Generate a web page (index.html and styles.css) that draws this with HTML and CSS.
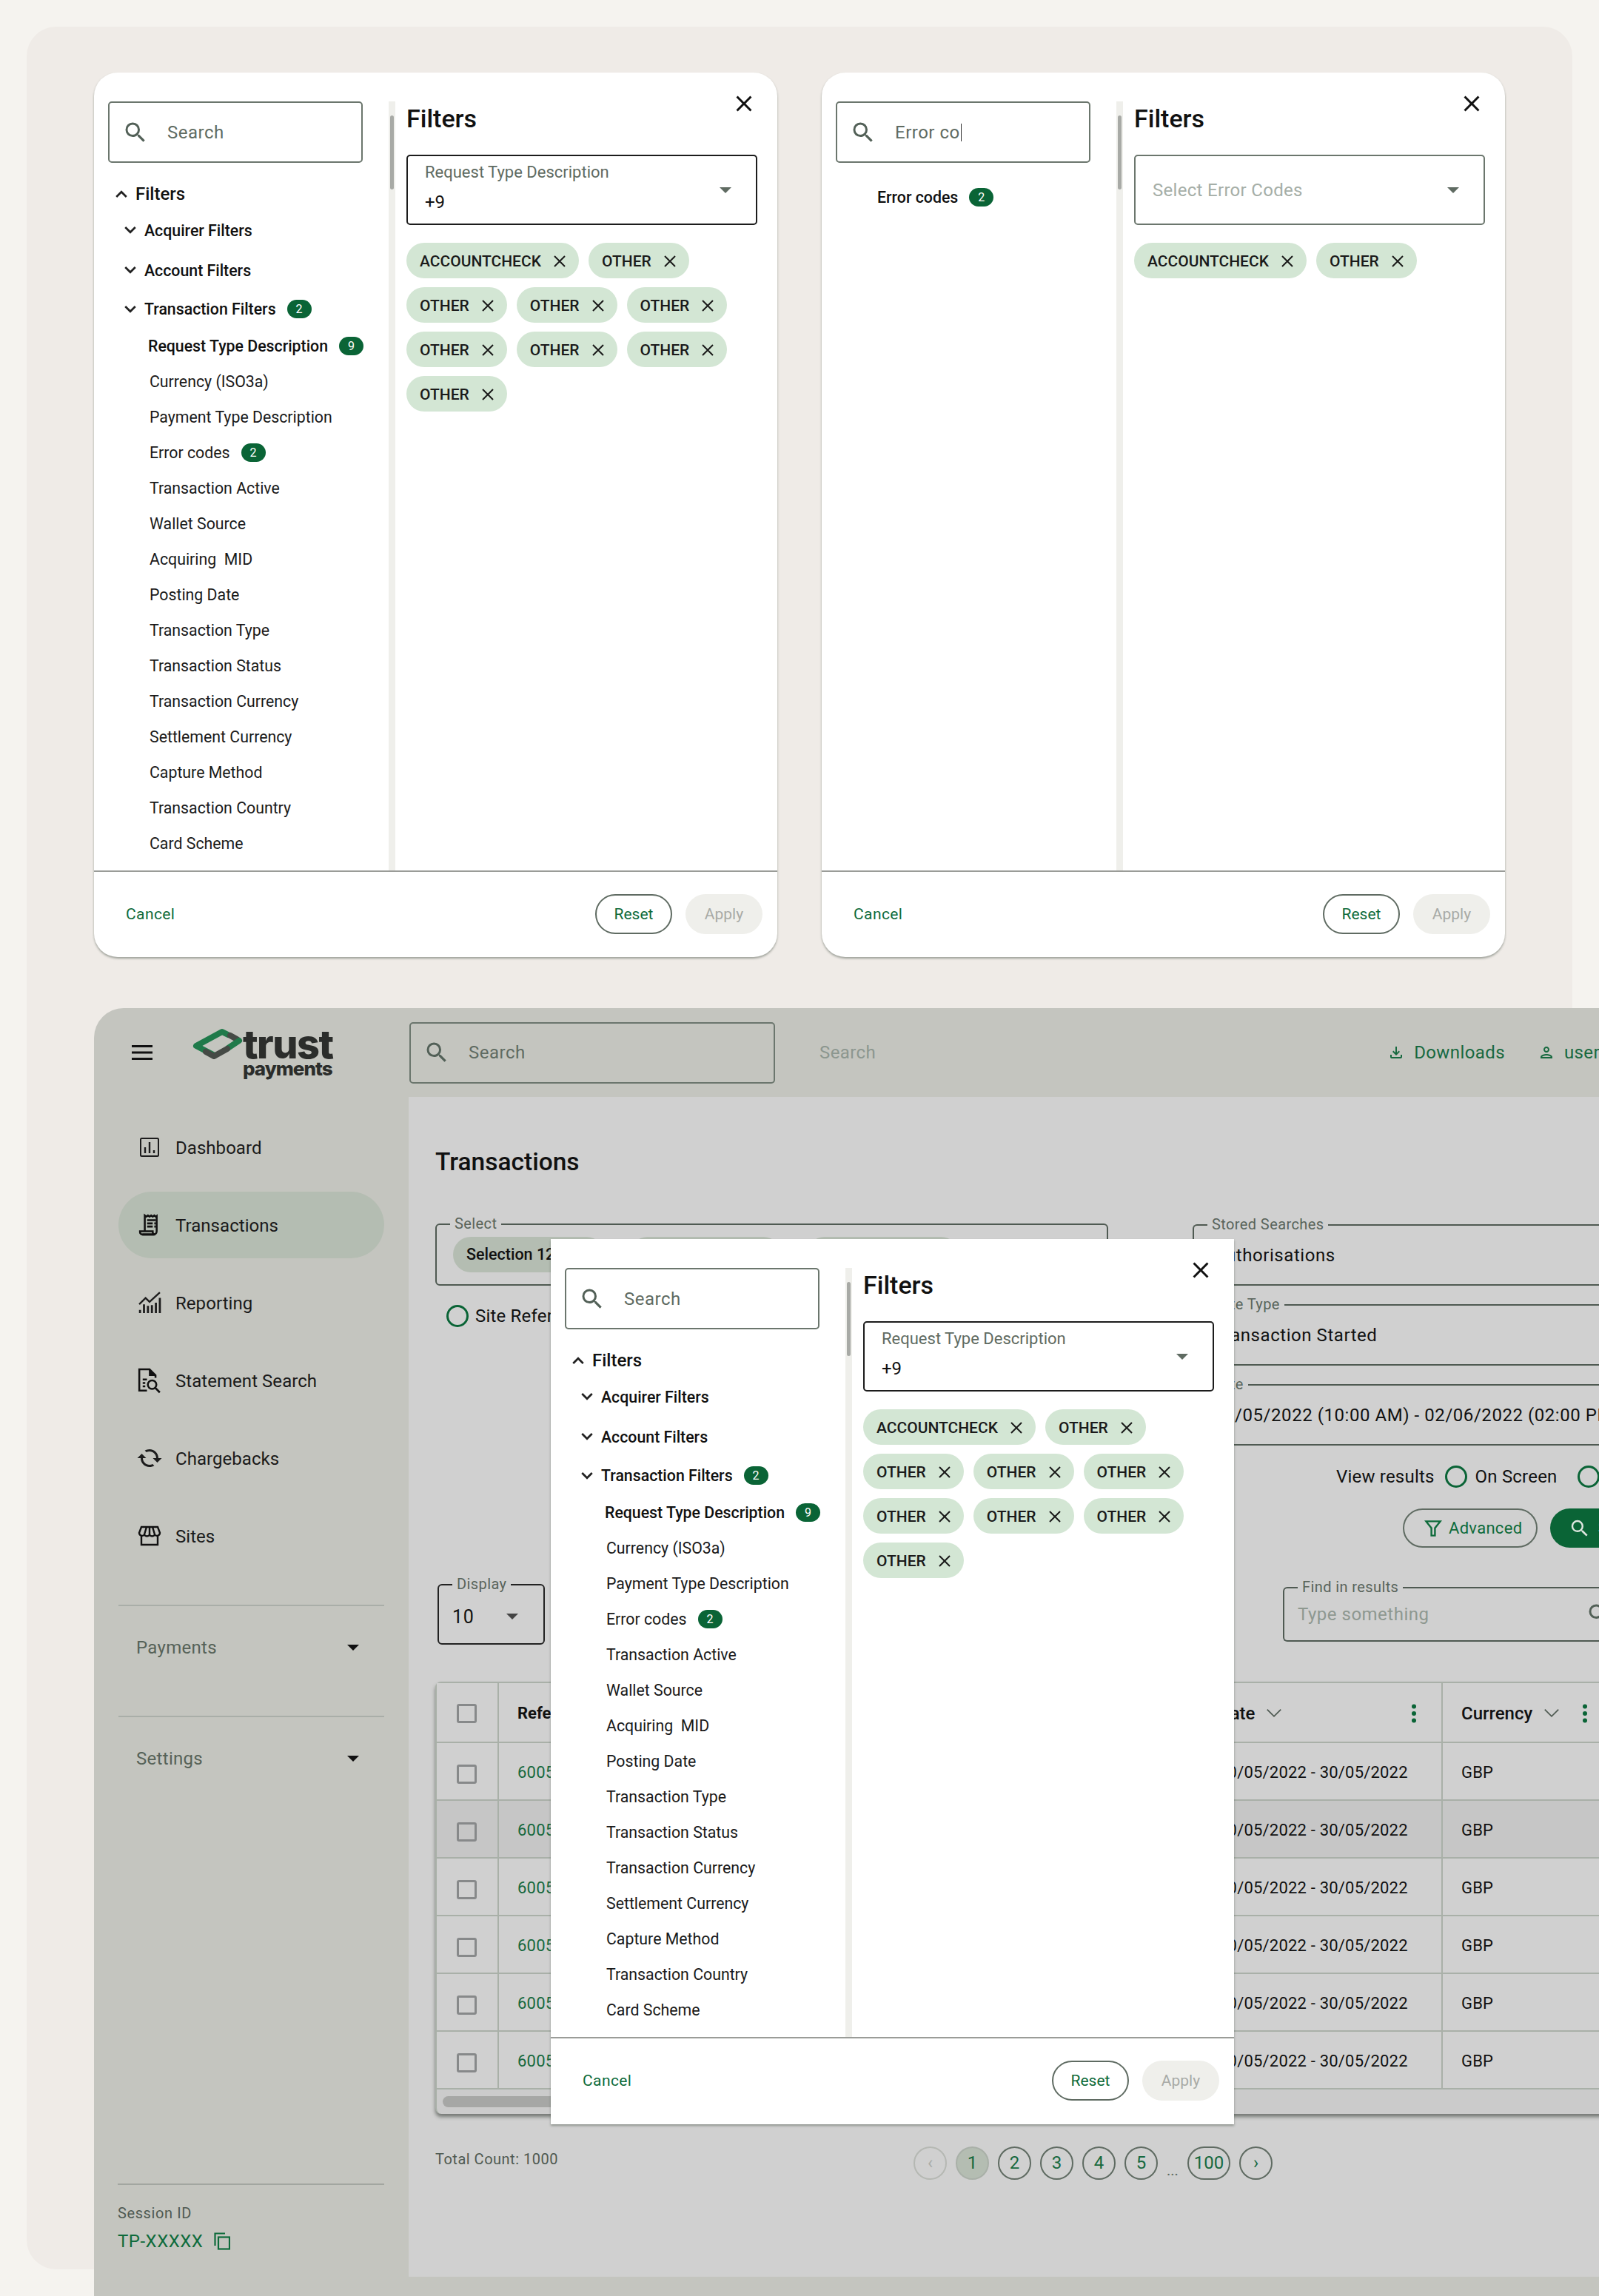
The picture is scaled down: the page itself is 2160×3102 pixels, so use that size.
FILE: index.html
```html
<!DOCTYPE html>
<html lang="en">
<head>
    <meta charset="UTF-8">
    <title>Transactions - Filters</title>
    <link rel="stylesheet" href="styles.css">
</head>
<body>
    <svg class="sprite" xmlns="http://www.w3.org/2000/svg">
        <symbol id="i-search" viewBox="0 0 24 24"><path d="M15.5 14h-.79l-.28-.27A6.471 6.471 0 0 0 16 9.5 6.5 6.5 0 1 0 9.5 16c1.61 0 3.09-.59 4.23-1.57l.27.28v.79l5 4.99L20.49 19l-4.99-5zm-6 0C7.01 14 5 11.99 5 9.5S7.01 5 9.5 5 14 7.01 14 9.5 11.99 14 9.5 14z"/></symbol>
        <symbol id="i-close" viewBox="0 0 24 24"><path d="M19 6.41 17.59 5 12 10.59 6.41 5 5 6.41 10.59 12 5 17.59 6.41 19 12 13.41 17.59 19 19 17.59 13.41 12z"/></symbol>
        <symbol id="i-x" viewBox="0 0 20 20"><path d="M3 3 17 17M17 3 3 17" fill="none" stroke="currentColor" stroke-width="2"/></symbol>
        <symbol id="i-up" viewBox="0 0 16 10"><path d="M2 8.5 8 2.5l6 6" fill="none" stroke="currentColor" stroke-width="2.4"/></symbol>
        <symbol id="i-down" viewBox="0 0 16 10"><path d="M2 1.5 8 7.5l6-6" fill="none" stroke="currentColor" stroke-width="2.4"/></symbol>
        <symbol id="i-thin-down" viewBox="0 0 20 12"><path d="M1.5 1.5 10 10l8.5-8.5" fill="none" stroke="currentColor" stroke-width="1.6"/></symbol>
        <symbol id="i-kebab" viewBox="0 0 8 26"><circle cx="4" cy="3.5" r="3"/><circle cx="4" cy="13" r="3"/><circle cx="4" cy="22.5" r="3"/></symbol>
        <symbol id="i-download" viewBox="0 0 24 24"><path d="M18 15v3H6v-3H4v3c0 1.1.9 2 2 2h12c1.1 0 2-.9 2-2v-3h-2zm-1-4-1.41-1.41L13 12.17V4h-2v8.17L8.41 9.59 7 11l5 5 5-5z"/></symbol>
        <symbol id="i-user" viewBox="0 0 24 24"><path d="M12 6c1.1 0 2 .9 2 2s-.9 2-2 2-2-.9-2-2 .9-2 2-2m0 10c2.7 0 5.8 1.29 6 2H6c.23-.72 3.31-2 6-2m0-12C9.79 4 8 5.79 8 8s1.79 4 4 4 4-1.79 4-4-1.79-4-4-4zm0 10c-2.67 0-8 1.34-8 4v2h16v-2c0-2.66-5.33-4-8-4z"/></symbol>
    </svg>

    <div class="backdrop">
        <div class="card-row">
            <section class="filter-modal rounded">
                <svg class="modal-close"><use href="#i-close"/></svg>
                <div class="modal-body">
                    <div class="tree-pane">
                        <div class="search-box"><svg class="search-icon"><use href="#i-search"/></svg><span>Search</span></div>
                        <div class="tree-root"><svg class="chev"><use href="#i-up"/></svg>Filters</div>
                        <div class="tree-group"><svg class="chev"><use href="#i-down"/></svg>Acquirer Filters</div>
                        <div class="tree-group"><svg class="chev"><use href="#i-down"/></svg>Account Filters</div>
                        <div class="tree-group open"><svg class="chev"><use href="#i-down"/></svg>Transaction Filters<span class="count">2</span></div>
                        <div class="tree-item active">Request Type Description<span class="count">9</span></div>
                        <div class="tree-item">Currency (ISO3a)</div>
                        <div class="tree-item">Payment Type Description</div>
                        <div class="tree-item">Error codes<span class="count">2</span></div>
                        <div class="tree-item">Transaction Active</div>
                        <div class="tree-item">Wallet Source</div>
                        <div class="tree-item">Acquiring&nbsp; MID</div>
                        <div class="tree-item">Posting Date</div>
                        <div class="tree-item">Transaction Type</div>
                        <div class="tree-item">Transaction Status</div>
                        <div class="tree-item">Transaction Currency</div>
                        <div class="tree-item">Settlement Currency</div>
                        <div class="tree-item">Capture Method</div>
                        <div class="tree-item">Transaction Country</div>
                        <div class="tree-item">Card Scheme</div>
                    </div>
                    <div class="scroll-track"><div class="scroll-thumb"></div></div>
                    <div class="detail-pane">
                        <h2 class="detail-title">Filters</h2>
                        <div class="select-box">
                            <div class="select-label">Request Type Description</div>
                            <div class="select-value">+9</div>
                            <i class="caret select-caret"></i>
                        </div>
                        <div class="chips">
                            <span class="chip">ACCOUNTCHECK<svg><use href="#i-x"/></svg></span>
                            <span class="chip">OTHER<svg><use href="#i-x"/></svg></span>
                            <span class="chip">OTHER<svg><use href="#i-x"/></svg></span>
                            <span class="chip">OTHER<svg><use href="#i-x"/></svg></span>
                            <span class="chip">OTHER<svg><use href="#i-x"/></svg></span>
                            <span class="chip">OTHER<svg><use href="#i-x"/></svg></span>
                            <span class="chip">OTHER<svg><use href="#i-x"/></svg></span>
                            <span class="chip">OTHER<svg><use href="#i-x"/></svg></span>
                            <span class="chip">OTHER<svg><use href="#i-x"/></svg></span>
                        </div>
                    </div>
                </div>
                <div class="modal-footer">
                    <span class="cancel">Cancel</span>
                    <span class="btn-reset">Reset</span>
                    <span class="btn-apply">Apply</span>
                </div>
            </section>

            <section class="filter-modal rounded">
                <svg class="modal-close"><use href="#i-close"/></svg>
                <div class="modal-body">
                    <div class="tree-pane">
                        <div class="search-box"><svg class="search-icon"><use href="#i-search"/></svg><span>Error co<b class="text-caret"></b></span></div>
                        <div class="tree-item active found">Error codes<span class="count">2</span></div>
                    </div>
                    <div class="scroll-track"><div class="scroll-thumb"></div></div>
                    <div class="detail-pane">
                        <h2 class="detail-title">Filters</h2>
                        <div class="select-box empty">
                            <div class="select-placeholder">Select Error Codes</div>
                            <i class="caret select-caret"></i>
                        </div>
                        <div class="chips">
                            <span class="chip">ACCOUNTCHECK<svg><use href="#i-x"/></svg></span>
                            <span class="chip">OTHER<svg><use href="#i-x"/></svg></span>
                        </div>
                    </div>
                </div>
                <div class="modal-footer">
                    <span class="cancel">Cancel</span>
                    <span class="btn-reset">Reset</span>
                    <span class="btn-apply">Apply</span>
                </div>
            </section>
        </div>

        <div class="app">
            <header class="app-header">
                <div class="brand">
                    <svg class="burger" viewBox="0 0 28 20"><path d="M0 1.5h28M0 10h28M0 18.5h28" stroke="#111" stroke-width="3"/></svg>
                    <div class="logo">
                        <svg class="logo-mark" viewBox="0 0 70 46">
                            <g fill="none" stroke-width="8" stroke-linejoin="round" stroke-linecap="round">
                                <path d="M30 37 5 24 40 5 48 9" stroke="#1f7a4a"/>
                                <path d="M51 10 60 15" stroke="#454a45"/>
                                <path d="M63 17 48 27" stroke="#1f7a4a"/>
                                <path d="M47 28 29 38 18 32" stroke="#454a45"/>
                            </g>
                        </svg>
                        <div class="logo-text">
                            <div class="logo-trust">trust</div>
                            <div class="logo-payments">payments</div>
                        </div>
                    </div>
                </div>
                <div class="search-box header-search"><svg class="search-icon"><use href="#i-search"/></svg><span>Search</span></div>
                <div class="header-hint">Search</div>
                <div class="header-link downloads"><svg><use href="#i-download"/></svg>Downloads</div>
                <div class="header-link account"><svg><use href="#i-user"/></svg>username</div>
            </header>

            <div class="app-body">
                <aside class="sidebar">
                    <nav class="nav">
                        <div class="nav-item">
                            <svg viewBox="0 0 30 30" fill="none" stroke="#1d1d1d"><rect x="3" y="3" width="24" height="24" rx="1.5" stroke-width="2"/><path d="M9 23v-8M15 23V8M21 23v-4" stroke-width="2.4"/></svg>
                            Dashboard
                        </div>
                        <div class="nav-item current">
                            <svg viewBox="0 0 28 28" fill="none" stroke="#111"><path d="M8 22V2l2 1.5 2-1.5 2 1.5 2-1.5 2 1.5 2-1.5 2 1.5 1-.8V22a4 4 0 0 1-4 4H5" stroke-width="2.4"/><path d="M2 22h16v1a3 3 0 0 0 3 3H5a3 3 0 0 1-3-3z" stroke-width="2.4"/><path d="M11 8h11M11 12h7M20 12h2M11 16h7M20 16h2" stroke-width="2.4"/></svg>
                            Transactions
                        </div>
                        <div class="nav-item">
                            <svg viewBox="0 0 28 28" fill="none" stroke="#1d1d1d"><path d="M1 16 9 8l5 5L27 1" stroke-width="2.2"/><path d="M2 27v-4M7 27V16M12 27v-9M17 27v-10M22 27V14M27 27V8" stroke-width="2.6"/></svg>
                            Reporting
                        </div>
                        <div class="nav-item">
                            <svg viewBox="3 2 26 26" fill="none" stroke="#111"><path d="M13 27H4V2h12l7 7v3" stroke-width="2.2"/><path d="M16 2v7h7" fill="#111" stroke-width="1.5"/><path d="M8 14h5M8 18h3M8 22h3" stroke-width="2.2"/><circle cx="19" cy="20" r="5" stroke-width="2.2"/><path d="m23 24 5 5" stroke-width="2.4"/></svg>
                            Statement Search
                        </div>
                        <div class="nav-item">
                            <svg viewBox="2 2 20 20" fill="#1d1d1d"><path transform="matrix(1 0 0 -1 0 24)" d="M19 8l-4 4h3c0 3.31-2.69 6-6 6-1.01 0-1.97-.25-2.8-.7l-1.46 1.46C8.97 19.54 10.43 20 12 20c4.42 0 8-3.58 8-8h3l-4-4zM6 12c0-3.31 2.69-6 6-6 1.01 0 1.97.25 2.8.7l1.46-1.46C15.03 4.46 13.57 4 12 4c-4.42 0-8 3.58-8 8H1l4 4 4-4H6z"/></svg>
                            Chargebacks
                        </div>
                        <div class="nav-item">
                            <svg viewBox="0 0 30 28" fill="none" stroke="#111" stroke-width="2.4"><path d="M4 14v12h22V14"/><path d="M4 2h22l3 8a4 4 0 0 1-7 2.5 4 4 0 0 1-7 0 4 4 0 0 1-7 0A4 4 0 0 1 1 10z"/><path d="M11 2 8 12M19 2l3 10M15 2v10"/></svg>
                            Sites
                        </div>
                    </nav>
                    <div class="side-section">Payments<i class="caret dark"></i></div>
                    <div class="side-section">Settings<i class="caret dark"></i></div>
                    <div class="session">
                        <div class="session-label">Session ID</div>
                        <div class="session-id">TP-XXXXX
                            <svg viewBox="0 0 22 24" fill="none" stroke="#0e6b3b" stroke-width="2.2"><path d="M1.5 18V1.5H15"/><rect x="6" y="6.5" width="15" height="16"/></svg>
                        </div>
                    </div>
                </aside>

                <main class="main">
                    <h1 class="page-title">Transactions</h1>
                    <div class="search-panel">
                        <div class="panel-left">
                            <div class="field select-field">
                                <span class="field-label">Select</span>
                                <span class="sel-chip">Selection 123456</span>
                                <span class="sel-chip">Selection 123456</span>
                                <span class="sel-chip">Selection 123456</span>
                            </div>
                            <div class="radio-row site-ref"><i class="radio"></i>Site Reference</div>
                        </div>
                        <div class="panel-right">
                            <div class="field open-field"><span class="field-label">Stored Searches</span>Authorisations</div>
                            <div class="field open-field"><span class="field-label">Date Type</span>Transaction Started</div>
                            <div class="field open-field"><span class="field-label">Date</span>30/05/2022 (10:00 AM) - 02/06/2022 (02:00 PM)</div>
                            <div class="radio-row view-row">View results<i class="radio"></i>On Screen<i class="radio"></i>File</div>
                            <div class="actions">
                                <span class="btn-advanced">
                                    <svg viewBox="0 0 20 20" fill="none" stroke="#0e6b3b" stroke-width="2"><path d="M2 2h16l-6 7.5V18H8V9.5z"/></svg>
                                    Advanced
                                </span>
                                <span class="btn-search"><svg><use href="#i-search"/></svg>Search</span>
                            </div>
                        </div>
                    </div>
                    <div class="toolbar">
                        <div class="field display-field"><span class="field-label">Display</span>10<i class="caret"></i></div>
                        <div class="field find-field"><span class="field-label">Find in results</span><span class="find-hint">Type something</span><svg class="search-icon"><use href="#i-search"/></svg></div>
                    </div>
                    <div class="table">
                        <div class="t-row t-head">
                            <div class="cell"><i class="check"></i></div>
                            <div class="cell">Reference</div>
                            <div class="cell">Date<svg class="sort"><use href="#i-thin-down"/></svg><svg class="kebab"><use href="#i-kebab"/></svg></div>
                            <div class="cell">Currency<svg class="sort"><use href="#i-thin-down"/></svg><svg class="kebab"><use href="#i-kebab"/></svg></div>
                        </div>
                        <div class="t-row">
                            <div class="cell"><i class="check"></i></div><div class="cell ref">6005000001</div>
                            <div class="cell">30/05/2022 - 30/05/2022</div><div class="cell">GBP</div>
                        </div>
                        <div class="t-row shaded">
                            <div class="cell"><i class="check"></i></div><div class="cell ref">6005000002</div>
                            <div class="cell">30/05/2022 - 30/05/2022</div><div class="cell">GBP</div>
                        </div>
                        <div class="t-row">
                            <div class="cell"><i class="check"></i></div><div class="cell ref">6005000003</div>
                            <div class="cell">30/05/2022 - 30/05/2022</div><div class="cell">GBP</div>
                        </div>
                        <div class="t-row">
                            <div class="cell"><i class="check"></i></div><div class="cell ref">6005000004</div>
                            <div class="cell">30/05/2022 - 30/05/2022</div><div class="cell">GBP</div>
                        </div>
                        <div class="t-row">
                            <div class="cell"><i class="check"></i></div><div class="cell ref">6005000005</div>
                            <div class="cell">30/05/2022 - 30/05/2022</div><div class="cell">GBP</div>
                        </div>
                        <div class="t-row">
                            <div class="cell"><i class="check"></i></div><div class="cell ref">6005000006</div>
                            <div class="cell">30/05/2022 - 30/05/2022</div><div class="cell">GBP</div>
                        </div>
                        <div class="t-scroll"><div class="t-thumb"></div></div>
                    </div>
                    <div class="table-footer">
                        <div class="total">Total Count: 1000</div>
                        <div class="pager">
                            <span class="page-btn off">&#8249;</span>
                            <span class="page-btn on">1</span>
                            <span class="page-btn">2</span>
                            <span class="page-btn">3</span>
                            <span class="page-btn">4</span>
                            <span class="page-btn">5</span>
                            <span class="page-gap">...</span>
                            <span class="page-btn wide">100</span>
                            <span class="page-btn">&#8250;</span>
                        </div>
                    </div>
                </main>
            </div>

            <section class="filter-modal overlay">
                <svg class="modal-close"><use href="#i-close"/></svg>
                <div class="modal-body">
                    <div class="tree-pane">
                        <div class="search-box"><svg class="search-icon"><use href="#i-search"/></svg><span>Search</span></div>
                        <div class="tree-root"><svg class="chev"><use href="#i-up"/></svg>Filters</div>
                        <div class="tree-group"><svg class="chev"><use href="#i-down"/></svg>Acquirer Filters</div>
                        <div class="tree-group"><svg class="chev"><use href="#i-down"/></svg>Account Filters</div>
                        <div class="tree-group open"><svg class="chev"><use href="#i-down"/></svg>Transaction Filters<span class="count">2</span></div>
                        <div class="tree-item active">Request Type Description<span class="count">9</span></div>
                        <div class="tree-item">Currency (ISO3a)</div>
                        <div class="tree-item">Payment Type Description</div>
                        <div class="tree-item">Error codes<span class="count">2</span></div>
                        <div class="tree-item">Transaction Active</div>
                        <div class="tree-item">Wallet Source</div>
                        <div class="tree-item">Acquiring&nbsp; MID</div>
                        <div class="tree-item">Posting Date</div>
                        <div class="tree-item">Transaction Type</div>
                        <div class="tree-item">Transaction Status</div>
                        <div class="tree-item">Transaction Currency</div>
                        <div class="tree-item">Settlement Currency</div>
                        <div class="tree-item">Capture Method</div>
                        <div class="tree-item">Transaction Country</div>
                        <div class="tree-item">Card Scheme</div>
                    </div>
                    <div class="scroll-track"><div class="scroll-thumb"></div></div>
                    <div class="detail-pane">
                        <h2 class="detail-title">Filters</h2>
                        <div class="select-box">
                            <div class="select-label">Request Type Description</div>
                            <div class="select-value">+9</div>
                            <i class="caret select-caret"></i>
                        </div>
                        <div class="chips">
                            <span class="chip">ACCOUNTCHECK<svg><use href="#i-x"/></svg></span>
                            <span class="chip">OTHER<svg><use href="#i-x"/></svg></span>
                            <span class="chip">OTHER<svg><use href="#i-x"/></svg></span>
                            <span class="chip">OTHER<svg><use href="#i-x"/></svg></span>
                            <span class="chip">OTHER<svg><use href="#i-x"/></svg></span>
                            <span class="chip">OTHER<svg><use href="#i-x"/></svg></span>
                            <span class="chip">OTHER<svg><use href="#i-x"/></svg></span>
                            <span class="chip">OTHER<svg><use href="#i-x"/></svg></span>
                            <span class="chip">OTHER<svg><use href="#i-x"/></svg></span>
                        </div>
                    </div>
                </div>
                <div class="modal-footer">
                    <span class="cancel">Cancel</span>
                    <span class="btn-reset">Reset</span>
                    <span class="btn-apply">Apply</span>
                </div>
            </section>
        </div>
    </div>
</body>
</html>
```

FILE: styles.css
```css
* {
    box-sizing: border-box;
}
html, body {
    margin: 0;
    height: 3102px;
    overflow: hidden;
}
body {
    width: 2160px;
    padding: 36px;
    background-color: #f5f3ef;
    font-family: Roboto, "Liberation Sans", sans-serif;
    color: #111;
}
i {
    font-style: normal;
    display: block;
}
.sprite {
    position: absolute;
    width: 0;
    height: 0;
}

/* outer beige panel */
.backdrop {
    width: 2088px;
    height: 3030px;
    padding: 62px 0 0 91px;
    background-color: #efebe7;
    border-radius: 40px;
}
.card-row {
    display: flex;
    gap: 60px;
}

/* filter modal, used three times */
.filter-modal {
    position: relative;
    width: 923px;
    height: 1195px;
    background-color: #fff;
    box-shadow: 0 2px 3px rgba(60, 70, 60, 0.45);
}
.filter-modal.rounded {
    border-radius: 32px;
}
.filter-modal.overlay {
    position: absolute;
    left: 617px;
    top: 312px;
    height: 1196px;
}
.modal-close {
    position: absolute;
    top: 24px;
    right: 27px;
    width: 36px;
    height: 36px;
    fill: #111;
}
.modal-body {
    display: flex;
    height: 1080px;
    padding-top: 39px;
    border-bottom: 2px solid #9a9c98;
}
.tree-pane {
    width: 398px;
    padding-left: 19px;
    flex-shrink: 0;
}
.search-box {
    display: flex;
    align-items: center;
    width: 344px;
    height: 83px;
    padding-left: 17px;
    border: 2px solid #6b766d;
    border-radius: 5px;
    font-size: 24px;
    letter-spacing: 0.5px;
    color: #5f6b62;
}
.search-icon {
    width: 36px;
    height: 36px;
    margin-right: 25px;
    fill: #526057;
    flex-shrink: 0;
}
.text-caret {
    display: inline-block;
    width: 1px;
    height: 24px;
    margin-left: 1px;
    vertical-align: -4px;
    background-color: #333;
}
.tree-root {
    display: flex;
    align-items: center;
    height: 44px;
    margin-top: 20px;
    font-size: 24px;
    font-weight: 500;
}
.chev {
    width: 18px;
    height: 12px;
    color: #222;
    flex-shrink: 0;
}
.tree-root .chev {
    margin: 0 10px 0 9px;
}
.tree-group {
    display: flex;
    align-items: center;
    height: 54px;
    font-size: 21.3px;
    font-weight: 500;
}
.tree-group .chev {
    margin: 0 10px 0 21px;
}
.tree-group.open {
    height: 51px;
}
.tree-item {
    display: flex;
    align-items: center;
    height: 48px;
    padding-left: 56px;
    font-size: 21.3px;
    color: #1a1a1a;
}
.tree-item.active {
    padding-left: 54px;
    font-weight: 500;
    color: #111;
}
.tree-item.found {
    height: 48px;
    margin-top: 22px;
    padding-left: 56px;
}
.count {
    display: inline-block;
    width: 33px;
    height: 25px;
    margin-left: 15px;
    border-radius: 13px;
    background-color: #0a6436;
    color: #fff;
    font-size: 16px;
    font-weight: 400;
    line-height: 25px;
    text-align: center;
}
.scroll-track {
    width: 9px;
    background-color: #efefeb;
    padding: 19px 2px 0;
    flex-shrink: 0;
}
.scroll-thumb {
    height: 100px;
    border-radius: 3px;
    background-color: #a8aaa6;
}
.detail-pane {
    flex: 1;
    padding: 3px 27px 0 15px;
}
.detail-title {
    margin: 0 0 29px;
    font-size: 34px;
    line-height: 40px;
    font-weight: 500;
}
.select-box {
    position: relative;
    height: 95px;
    padding: 9px 23px;
    border: 2px solid #1c1c1c;
    border-radius: 5px;
}
.select-box.empty {
    border-color: #6b766d;
    padding-top: 32px;
}
.select-label {
    font-size: 22px;
    line-height: 26px;
    color: #5f6b62;
}
.select-value {
    margin-top: 13px;
    font-size: 24px;
    line-height: 28px;
}
.select-placeholder {
    font-size: 24px;
    line-height: 28px;
    letter-spacing: 0.3px;
    color: #a5aea7;
}
.caret {
    width: 0;
    height: 0;
    border-left: 8px solid transparent;
    border-right: 8px solid transparent;
    border-top: 8px solid #5f6b62;
}
.caret.dark {
    border-top-color: #111;
    margin-left: auto;
}
.select-caret {
    position: absolute;
    top: 42px;
    right: 33px;
}
.chips {
    display: flex;
    flex-wrap: wrap;
    gap: 12px 13px;
    margin-top: 24px;
}
.chip {
    display: flex;
    align-items: center;
    height: 48px;
    padding: 2px 16px 0 18px;
    border-radius: 24px;
    background-color: #d3e6d4;
    font-size: 21px;
    font-weight: 500;
    color: #1a1a1a;
}
.chip svg {
    width: 20px;
    height: 20px;
    margin-left: 15px;
    color: #1a1a1a;
}
.modal-footer {
    display: flex;
    align-items: center;
    height: 114px;
    padding: 0 20px 0 43px;
}
.cancel {
    margin-right: auto;
    font-size: 21px;
    letter-spacing: 0.4px;
    color: #0e6b3b;
}
.btn-reset, .btn-apply {
    display: flex;
    align-items: center;
    justify-content: center;
    width: 104px;
    height: 54px;
    border-radius: 27px;
    font-size: 21px;
}
.btn-reset {
    border: 2px solid #5f6b62;
    color: #0e6b3b;
}
.btn-apply {
    margin-left: 18px;
    background-color: #efefeb;
    color: #a8aaa6;
}

/* app behind the third modal */
.app {
    position: relative;
    width: 2200px;
    height: 1740px;
    margin-top: 69px;
    background-color: #c4c5bf;
    border-radius: 40px 0 0 0;
}
.app-header {
    display: flex;
    align-items: center;
    height: 120px;
}
.brand {
    display: flex;
    align-items: center;
    width: 426px;
    padding-left: 51px;
}
.burger {
    width: 28px;
    height: 20px;
}
.logo {
    display: flex;
    align-items: flex-start;
    margin-left: 54px;
}
.logo-mark {
    width: 70px;
    height: 46px;
}
.logo-text {
    margin-left: -2px;
    color: #2b2d2b;
    font-family: Inter, Roboto, sans-serif;
    font-weight: 800;
}
.logo-trust {
    font-size: 54px;
    line-height: 43px;
    letter-spacing: -1.5px;
}
.logo-payments {
    font-size: 26px;
    line-height: 24px;
    letter-spacing: -1px;
}
.header-search {
    width: 494px;
}
.header-hint {
    margin-left: 60px;
    font-size: 24px;
    letter-spacing: 0.4px;
    color: #8c978f;
}
.header-link {
    display: flex;
    align-items: center;
    font-size: 24px;
    letter-spacing: 0.4px;
    color: #17693f;
}
.header-link svg {
    width: 24px;
    height: 24px;
    margin-right: 12px;
    fill: #17693f;
}
.downloads {
    margin-left: 691px;
}
.account {
    margin-left: 44px;
}
.app-body {
    display: flex;
    height: 1594px;
}

/* sidebar */
.sidebar {
    display: flex;
    flex-direction: column;
    width: 425px;
    padding: 23px 33px 0 33px;
    flex-shrink: 0;
}
.nav {
    display: flex;
    flex-direction: column;
    gap: 15px;
    padding-bottom: 48px;
}
.nav-item {
    display: flex;
    align-items: center;
    gap: 20px;
    height: 90px;
    padding: 2px 0 0 27px;
    border-radius: 45px;
    font-size: 24px;
    letter-spacing: 0.05px;
    color: #1a1a1a;
}
.nav-item svg {
    width: 30px;
    height: 30px;
    margin-top: -2px;
    overflow: visible;
}
.nav-item.current {
    background-color: #b4bdb2;
}
.side-section {
    display: flex;
    align-items: center;
    height: 150px;
    padding: 0 34px 36px 24px;
    border-top: 2px solid #a9aea8;
    font-size: 24px;
    letter-spacing: 0.3px;
    color: #566258;
}
.session {
    height: 126px;
    margin: auto 0 0 -1px;
    padding-top: 26px;
    border-top: 2px solid #a2a6a0;
}
.session-label {
    font-size: 20px;
    line-height: 24px;
    letter-spacing: 0.6px;
    color: #4f5a52;
}
.session-id {
    display: flex;
    align-items: center;
    gap: 15px;
    margin-top: 12px;
    font-size: 24px;
    letter-spacing: 0.5px;
    color: #0e6b3b;
}
.session-id svg {
    width: 22px;
    height: 24px;
}

/* main column */
.main {
    flex: 1;
    min-width: 0;
    padding: 68px 0 0 36px;
    background-color: #d0d0d0;
}
.page-title {
    margin: 0 0 63px;
    font-size: 33.5px;
    line-height: 40px;
    font-weight: 500;
}
.search-panel {
    display: flex;
    gap: 114px;
    height: 487px;
}
.panel-left {
    width: 909px;
    flex-shrink: 0;
}
.panel-right {
    flex: 1;
}
.field {
    position: relative;
    border: 2px solid #4f5a52;
    border-radius: 6px;
    font-size: 24px;
}
.field-label {
    position: absolute;
    top: -14px;
    left: 18px;
    padding: 0 6px;
    background-color: #d0d0d0;
    font-size: 20px;
    line-height: 24px;
    letter-spacing: 0.4px;
    color: #59645b;
}
.select-field {
    display: flex;
    gap: 35px;
    height: 84px;
    padding: 16px 22px;
}
.sel-chip {
    height: 48px;
    padding: 0 18px;
    border-radius: 24px;
    background-color: #b4bdb2;
    font-size: 21.5px;
    font-weight: 500;
    line-height: 48px;
    white-space: nowrap;
}
.open-field {
    display: flex;
    align-items: center;
    height: 83px;
    margin: 0 0 25px 0;
    padding-left: 27px;
    border-right: none;
    letter-spacing: 0.55px;
    white-space: nowrap;
    border-radius: 6px 0 0 6px;
    width: 800px;
}
.open-field:nth-child(1) {
    margin-top: 1px;
}
.radio-row {
    display: flex;
    align-items: center;
    height: 30px;
    font-size: 24px;
    letter-spacing: 0.2px;
}
.radio {
    width: 30px;
    height: 30px;
    border: 3px solid #0a6436;
    border-radius: 50%;
    flex-shrink: 0;
}
.site-ref {
    margin: 26px 0 0 15px;
    gap: 9px;
}
.view-row {
    margin: 27px 0 0 194px;
    white-space: nowrap;
}
.view-row .radio {
    margin: 0 11px 0 14px;
}
.view-row .radio:last-of-type {
    margin-left: 27px;
}
.actions {
    display: flex;
    gap: 17px;
    margin: 28px 0 0 284px;
}
.btn-advanced, .btn-search {
    display: flex;
    align-items: center;
    height: 53px;
    border-radius: 27px;
    font-size: 22px;
    letter-spacing: 0.3px;
}
.btn-advanced {
    gap: 9px;
    width: 182px;
    padding-left: 27px;
    border: 2px solid #5f6b62;
    color: #0e6b3b;
}
.btn-advanced svg {
    width: 24px;
    height: 24px;
}
.btn-search {
    width: 200px;
    padding-left: 25px;
    background-color: #0a6436;
    color: #fff;
}
.btn-search svg {
    width: 30px;
    height: 30px;
    margin-right: 10px;
    fill: #dfe6e0;
}
.toolbar {
    display: flex;
    align-items: center;
    height: 82px;
}
.display-field {
    display: flex;
    align-items: center;
    justify-content: space-between;
    width: 145px;
    height: 82px;
    margin-left: 3px;
    padding: 6px 34px 0 18px;
    border-color: #222;
    font-size: 25px;
    letter-spacing: 0.8px;
    flex-shrink: 0;
}
.display-field .caret {
    border-top-color: #444;
}
.find-field {
    display: flex;
    align-items: center;
    width: 900px;
    height: 74px;
    margin-left: 997px;
    padding-left: 18px;
    border-right: none;
    flex-shrink: 0;
}
.find-hint {
    color: #8e9890;
    letter-spacing: 0.5px;
    margin-right: 212px;
}
.find-field .search-icon {
    margin: 0;
}

/* table */
.table {
    margin-top: 50px;
    width: 1800px;
    background-color: #cbcbcb;
    border: solid #a9b0a8;
    border-width: 2px 0 0 2px;
    border-radius: 8px 0 8px 8px;
    box-shadow: 0 4px 5px rgba(40, 48, 40, 0.55);
}
.t-row {
    display: grid;
    grid-template-columns: 84px 947px 328px 1fr;
    height: 78px;
    border-bottom: 2px solid #a9b0a8;
    background-color: #d0d0d0;
    font-size: 22px;
    letter-spacing: 0.2px;
}
.t-row .cell {
    padding-top: 2px;
}
.t-row .check {
    margin-top: 6px;
}
.t-head {
    height: 81px;
    font-size: 24px;
    font-weight: 500;
    letter-spacing: 0;
}
.t-head .check {
    margin-top: 0;
}
.shaded {
    background-color: #c6c6c6;
}
.cell {
    display: flex;
    align-items: center;
    padding-left: 25px;
    border-right: 2px solid #a9b0a8;
}
.cell:first-child {
    padding-left: 27px;
}
.t-head .cell:nth-child(2) {
    font-weight: 700;
    font-size: 22px;
}
.ref {
    color: #17693f;
}
.check {
    width: 27px;
    height: 26px;
    border: 3px solid #87898a;
    border-radius: 3px;
}
.sort {
    width: 22px;
    height: 13px;
    margin-left: 15px;
    color: #4f5a52;
}
.kebab {
    width: 8px;
    height: 26px;
    margin-left: 30px;
    fill: #0a6436;
}
.t-head .cell:nth-child(3) .kebab {
    margin-left: 174px;
}
.t-scroll {
    height: 33px;
    padding: 9px 0 0 8px;
}
.t-thumb {
    width: 420px;
    height: 15px;
    border-radius: 8px;
    background-color: #a6a7a5;
}
.table-footer {
    display: flex;
    align-items: flex-start;
    margin-top: 44px;
}
.total {
    width: 646px;
    font-size: 20px;
    line-height: 34px;
    letter-spacing: 0.5px;
    color: #4f5a52;
}
.pager {
    display: flex;
    gap: 12px;
}
.page-btn {
    width: 45px;
    height: 45px;
    border: 2px solid #5f6b62;
    border-radius: 50%;
    font-size: 24px;
    line-height: 41px;
    text-align: center;
    color: #17693f;
}
.page-btn.wide {
    width: 58px;
    border-radius: 23px;
}
.page-btn.on {
    background-color: #b4bdb2;
    border-color: #a9b0a8;
}
.page-btn.off {
    border-color: #b5b8b3;
    color: #a9aca7;
}
.page-gap {
    width: 16px;
    padding-top: 20px;
    font-size: 20px;
    color: #5f6b62;
}
```
